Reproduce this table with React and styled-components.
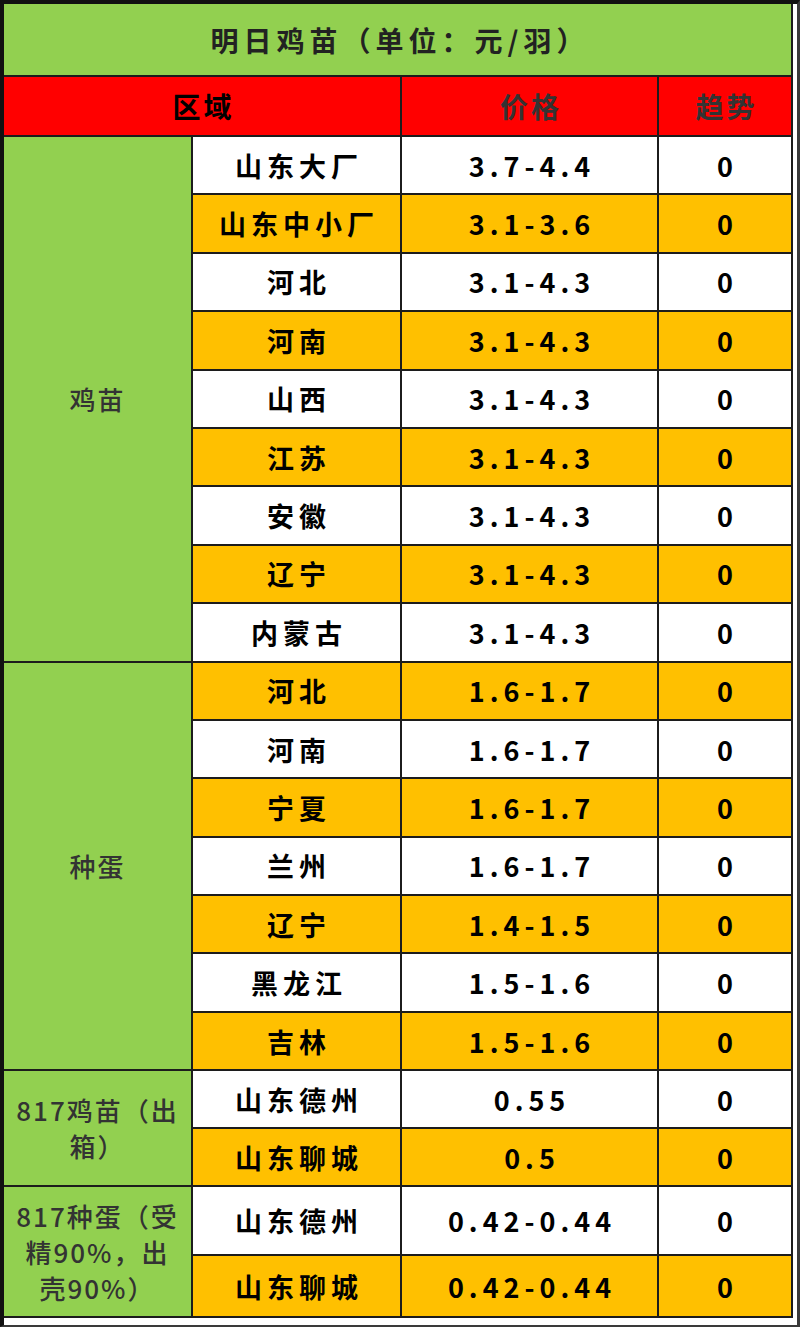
import React from "react";
import styled, { createGlobalStyle } from "styled-components";

const GlobalStyle = createGlobalStyle`
  html, body {
    margin: 0;
    padding: 0;
    background: #ffffff;
  }
  body {
    font-family: "Noto Sans CJK SC", "Noto Sans", sans-serif;
  }
`;

const GREEN = "#92d050";
const RED = "#ff0000";
const ORANGE = "#ffc000";
const WHITE = "#ffffff";

const chickRows = [
  ["山东大厂", "3.7-4.4"],
  ["山东中小厂", "3.1-3.6"],
  ["河北", "3.1-4.3"],
  ["河南", "3.1-4.3"],
  ["山西", "3.1-4.3"],
  ["江苏", "3.1-4.3"],
  ["安徽", "3.1-4.3"],
  ["辽宁", "3.1-4.3"],
  ["内蒙古", "3.1-4.3"],
];

const eggRows = [
  ["河北", "1.6-1.7"],
  ["河南", "1.6-1.7"],
  ["宁夏", "1.6-1.7"],
  ["兰州", "1.6-1.7"],
  ["辽宁", "1.4-1.5"],
  ["黑龙江", "1.5-1.6"],
  ["吉林", "1.5-1.6"],
];

const groups = [
  { label: ["鸡苗"], rows: chickRows },
  { label: ["种蛋"], rows: eggRows },
  {
    label: ["817鸡苗（出", "箱）"],
    rows: [
      ["山东德州", "0.55"],
      ["山东聊城", "0.5"],
    ],
  },
  {
    label: ["817种蛋（受", "精90%，出", "壳90%）"],
    rows: [
      ["山东德州", "0.42-0.44"],
      ["山东聊城", "0.42-0.44"],
    ],
  },
];

const Frame = styled.div`
  width: 800px;
  height: 1327px;
  box-sizing: border-box;
  border-left: 4px solid #111;
  border-top: 4px solid #111;
  border-right: 3px solid #3a3a3a;
  border-bottom: 2px solid #3a3a3a;
  padding-right: 4px;
  padding-bottom: 4px;
  background: #ffffff;
  margin-bottom: 2px;
`;

const Grid = styled.div`
  display: grid;
  grid-template-columns: 187px 207px 255px 132px;
  grid-template-rows: 71px 58px repeat(16, 56.4px) 56px 56px 67px 60px;
  gap: 2px;
  background: #1c1c1c;
  padding: 0 2px 2px 0;
  width: fit-content;
`;

const Cell = styled.div`
  background: ${(p) => p.$bg};
  grid-column: ${(p) => p.$col || "auto"};
  grid-row: ${(p) => p.$row || "auto"};
  display: flex;
  align-items: center;
  justify-content: center;
  text-align: center;
  color: #000;
  font-size: 27px;
  font-weight: 700;
  white-space: nowrap;
`;

const Title = styled(Cell)`
  color: #222;
  font-size: 28px;
  letter-spacing: 5px;
  padding-left: 5px;
`;

const HeadText = styled.span`
  color: ${(p) => p.$color};
  font-size: 28px;
  font-weight: 700;
  letter-spacing: 3px;
  margin-left: 3px;
`;

const GroupLabel = styled(Cell)`
  flex-direction: column;
  color: #333;
  font-weight: 500;
  font-size: 26px;
  line-height: 36px;
  letter-spacing: 2px;
`;

const Place = styled.span`
  letter-spacing: 5px;
  margin-left: 5px;
`;

const Price = styled.span`
  font-weight: 700;
  letter-spacing: 5px;
  margin-left: 5px;
`;

export default function App() {
  let rowIndex = 3;
  let stripe = 0;
  const cells = [];

  groups.forEach((g, gi) => {
    const start = rowIndex;
    cells.push(
      <GroupLabel
        key={`g${gi}`}
        $bg={GREEN}
        $col="1"
        $row={`${start} / span ${g.rows.length}`}
      >
        {g.label.map((line) => (
          <span key={line}>{line}</span>
        ))}
      </GroupLabel>
    );
    g.rows.forEach(([place, price], ri) => {
      const bg = stripe % 2 === 0 ? WHITE : ORANGE;
      const r = `${rowIndex}`;
      cells.push(
        <Cell key={`p${gi}-${ri}`} $bg={bg} $col="2" $row={r}>
          <Place>{place}</Place>
        </Cell>,
        <Cell key={`v${gi}-${ri}`} $bg={bg} $col="3" $row={r}>
          <Price>{price}</Price>
        </Cell>,
        <Cell key={`t${gi}-${ri}`} $bg={bg} $col="4" $row={r}>
          0
        </Cell>
      );
      rowIndex += 1;
      stripe += 1;
    });
  });

  return (
    <>
      <GlobalStyle />
      <Frame>
        <Grid>
          <Title $bg={GREEN} $col="1 / span 4" $row="1">
            明日鸡苗（单位：元/羽）
          </Title>
          <Cell $bg={RED} $col="1 / span 2" $row="2">
            <HeadText $color="#000">区域</HeadText>
          </Cell>
          <Cell $bg={RED} $col="3" $row="2">
            <HeadText $color="#333">价格</HeadText>
          </Cell>
          <Cell $bg={RED} $col="4" $row="2">
            <HeadText $color="#333">趋势</HeadText>
          </Cell>
          {cells}
        </Grid>
      </Frame>
    </>
  );
}
